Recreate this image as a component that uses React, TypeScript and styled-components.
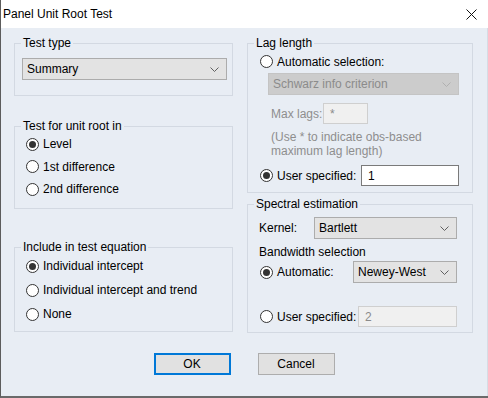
import React from 'react';
import styled, { createGlobalStyle } from 'styled-components';

const GlobalStyle = createGlobalStyle`
  html, body {
    margin: 0;
    padding: 0;
    background: #ffffff;
  }
  * {
    box-sizing: border-box;
  }
`;

const Window = styled.div`
  width: 488px;
  height: 398px;
  display: flex;
  flex-direction: column;
  background: #e8edf4;
  border-left: 1px solid #5c5c5c;
  border-bottom: 2px solid #6a6a6a;
  font-family: 'Liberation Sans', Arial, sans-serif;
  font-size: 12px;
  color: #000;
  box-shadow: inset -6px 0 0 -5px #d6dce4;
`;

const TitleBar = styled.div`
  height: 28px;
  flex: none;
  display: flex;
  align-items: center;
  justify-content: space-between;
  padding: 0 11px 0 2px;
  background: #ffffff;
  font-size: 12px;
`;

const Body = styled.div`
  display: flex;
  gap: 14px;
  padding: 8px 0 0 13px;
`;

const Column = styled.div<{ $w: number }>`
  width: ${(p) => p.$w}px;
  display: flex;
  flex-direction: column;
`;

const Group = styled.fieldset<{ $h: number; $mt?: number }>`
  margin: ${(p) => p.$mt ?? 0}px 0 0 0;
  padding: 0;
  min-width: 0;
  height: ${(p) => p.$h}px;
  border: 1px solid #d3d9e2;
`;

const Legend = styled.legend`
  margin-left: 6px;
  padding: 0 2px;
  line-height: 14px;
  font-size: 12px;
`;

const Content = styled.div<{ $pl: number }>`
  display: flex;
  flex-direction: column;
  align-items: flex-start;
  padding-left: ${(p) => p.$pl}px;
`;

const Row = styled.div<{ $h?: number; $mt?: number; $ml?: number }>`
  display: flex;
  align-items: center;
  height: ${(p) => p.$h ?? 22}px;
  margin-top: ${(p) => p.$mt ?? 0}px;
  margin-left: ${(p) => p.$ml ?? 0}px;
`;

const Circle = styled.span<{ $on?: boolean }>`
  width: 13px;
  height: 13px;
  border-radius: 50%;
  border: 1px solid #333333;
  background: #ffffff;
  display: inline-flex;
  align-items: center;
  justify-content: center;
  margin-right: 4px;
  flex: none;

  &::after {
    content: '';
    width: 7px;
    height: 7px;
    border-radius: 50%;
    background: ${(p) => (p.$on ? '#333333' : 'transparent')};
  }
`;

const Label = styled.span<{ $muted?: boolean; $w?: number }>`
  display: inline-flex;
  align-items: center;
  color: ${(p) => (p.$muted ? '#8e8e8e' : '#000')};
  width: ${(p) => (p.$w ? `${p.$w}px` : 'auto')};
  white-space: nowrap;
  flex: none;
`;

const Select = styled.div<{ $w: number; $off?: boolean; $mt?: number; $ml?: number }>`
  width: ${(p) => p.$w}px;
  height: 22px;
  margin-top: ${(p) => p.$mt ?? 0}px;
  margin-left: ${(p) => p.$ml ?? 0}px;
  display: flex;
  align-items: center;
  justify-content: space-between;
  padding: 0 7px 0 4px;
  background: ${(p) => (p.$off ? '#cccccc' : '#e3e3e3')};
  border: 1px solid ${(p) => (p.$off ? '#c4c4c4' : '#acacac')};
  color: ${(p) => (p.$off ? '#8b8b8b' : '#000')};
  flex: none;
`;

const Field = styled.div<{ $w: number; $off?: boolean }>`
  width: ${(p) => p.$w}px;
  height: 21px;
  display: flex;
  align-items: center;
  padding-left: 6px;
  background: ${(p) => (p.$off ? '#f0f0f0' : '#ffffff')};
  border: 1px solid ${(p) => (p.$off ? '#cfcfcf' : '#7a7a7a')};
  color: ${(p) => (p.$off ? '#8b8b8b' : '#000')};
  flex: none;
`;

const Hint = styled.div`
  margin: 6px 0 0 11px;
  line-height: 14px;
  color: #8e8e8e;
`;

const Note = styled.div<{ $mt: number }>`
  margin-top: ${(p) => p.$mt}px;
  line-height: 14px;
`;

const ButtonRow = styled.div`
  display: flex;
  justify-content: center;
  gap: 27px;
  margin-top: 20px;
  padding-right: 1px;
`;

const Button = styled.button<{ $primary?: boolean }>`
  width: 77px;
  height: 22px;
  padding: 0;
  font-family: inherit;
  font-size: 12px;
  color: #000;
  background: #e1e1e1;
  border: ${(p) => (p.$primary ? '2px solid #0078d7' : '1px solid #adadad')};
`;

const Chevron = ({ off }: { off?: boolean }) => (
  <svg width="9" height="5" viewBox="0 0 9 5">
    <polyline
      points="0.5,0.5 4.5,4.5 8.5,0.5"
      fill="none"
      stroke={off ? '#b0b0b0' : '#606060'}
      strokeWidth="1"
    />
  </svg>
);

const Radio = ({ on, w, children }: { on?: boolean; w?: number; children: React.ReactNode }) => (
  <Label $w={w}>
    <Circle $on={on} />
    {children}
  </Label>
);

export default function App() {
  return (
    <>
      <GlobalStyle />
      <Window>
        <TitleBar>
          <span>Panel Unit Root Test</span>
          <svg width="11" height="11" viewBox="0 0 11 11">
            <path d="M0.5 0.5 L10.5 10.5 M10.5 0.5 L0.5 10.5" stroke="#111" strokeWidth="1" />
          </svg>
        </TitleBar>

        <Body>
          <Column $w={219}>
            <Group $h={60}>
              <Legend>Test type</Legend>
              <Content $pl={7}>
                <Select $w={205} $mt={8}>
                  <span>Summary</span>
                  <Chevron />
                </Select>
              </Content>
            </Group>

            <Group $h={90} $mt={23}>
              <Legend>Test for unit root in</Legend>
              <Content $pl={11}>
                <Row $h={22}>
                  <Radio on>Level</Radio>
                </Row>
                <Row $h={23}>
                  <Radio>1st difference</Radio>
                </Row>
                <Row $h={22}>
                  <Radio>2nd difference</Radio>
                </Row>
              </Content>
            </Group>

            <Group $h={92} $mt={31}>
              <Legend>Include in test equation</Legend>
              <Content $pl={11}>
                <Row $h={24}>
                  <Radio on>Individual intercept</Radio>
                </Row>
                <Row $h={24}>
                  <Radio>Individual intercept and trend</Radio>
                </Row>
                <Row $h={24}>
                  <Radio>None</Radio>
                </Row>
              </Content>
            </Group>
          </Column>

          <Column $w={226}>
            <Group $h={157}>
              <Legend>Lag length</Legend>
              <Content $pl={12}>
                <Row $h={23}>
                  <Radio>Automatic selection:</Radio>
                </Row>
                <Select $w={191} $off $ml={8}>
                  <span>Schwarz info criterion</span>
                  <Chevron off />
                </Select>
                <Row $h={21} $mt={8} $ml={11}>
                  <Label $muted $w={52}>Max lags:</Label>
                  <Field $w={45} $off>*</Field>
                </Row>
                <Hint>
                  (Use * to indicate obs-based
                  <br />
                  maximum lag length)
                </Hint>
                <Row $h={21} $mt={7}>
                  <Radio on w={101}>User specified:</Radio>
                  <Field $w={98}>1</Field>
                </Row>
              </Content>
            </Group>

            <Group $h={136} $mt={4}>
              <Legend>Spectral estimation</Legend>
              <Content $pl={11}>
                <Row $h={22} $mt={6}>
                  <Label $w={55}>Kernel:</Label>
                  <Select $w={143}>
                    <span>Bartlett</span>
                    <Chevron />
                  </Select>
                </Row>
                <Note $mt={6}>Bandwidth selection</Note>
                <Row $h={22} $mt={2} $ml={1}>
                  <Radio on w={93}>Automatic:</Radio>
                  <Select $w={104}>
                    <span>Newey-West</span>
                    <Chevron />
                  </Select>
                </Row>
                <Row $h={21} $mt={23} $ml={1}>
                  <Radio w={98}>User specified:</Radio>
                  <Field $w={99} $off>2</Field>
                </Row>
              </Content>
            </Group>
          </Column>
        </Body>

        <ButtonRow>
          <Button $primary>OK</Button>
          <Button>Cancel</Button>
        </ButtonRow>
      </Window>
    </>
  );
}
